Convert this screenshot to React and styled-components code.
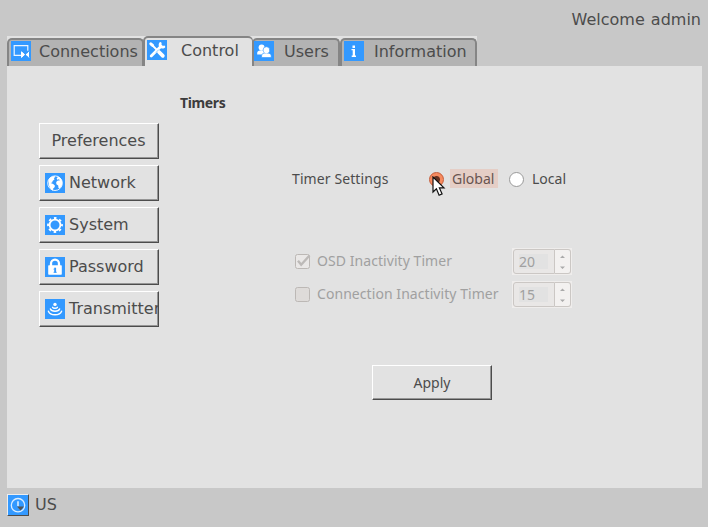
import React from "react";
import styled, { createGlobalStyle } from "styled-components";

const Global = createGlobalStyle`
  * { box-sizing: border-box; }
  body { margin: 0; overflow: hidden; background: #c8c8c8; }
`;

const Screen = styled.div`
  width: 708px;
  height: 527px;
  display: flex;
  flex-direction: column;
  background: #c8c8c8;
  color: #4c4c4c;
  font: 16px/20px "DejaVu Sans", sans-serif;
  white-space: nowrap;
`;

const Header = styled.header`
  height: 36px;
  padding: 10px 7px 0 0;
  text-align: right;
  word-spacing: 1px;
`;

const TabStrip = styled.nav`
  display: flex;
  align-items: flex-end;
  width: 470px;
  height: 30px;
  margin-left: 7px;
  background: #e2e2e2;
`;

const Tab = styled.div`
  display: flex;
  align-items: flex-start;
  width: ${(p) => p.$width}px;
  height: ${(p) => (p.$active ? 30 : 28)}px;
  padding: ${(p) => (p.$active ? 2 : 1)}px 0 0 ${(p) => p.$inset}px;
  border: 2px solid #858585;
  border-bottom: 0;
  border-radius: 5px 5px 0 0;
  background: ${(p) => (p.$active ? "#e2e2e2" : "#b3b3b3")};
  ${(p) => p.$active && "margin: 0 -1px; z-index: 1; border-right-width: 1px;"}
`;

const TabLabel = styled.span`
  margin-left: ${(p) => p.$gap}px;
  padding-top: 1px;
`;

const Tile = styled.svg`
  flex: none;
  width: 20px;
  height: 20px;
  background: #3399ff;
  color: #fff;
`;

const Panel = styled.main`
  display: flex;
  width: 695px;
  height: 422px;
  margin-left: 7px;
  padding-left: 32px;
  background: #e2e2e2;
`;

const Sidebar = styled.div`
  display: flex;
  flex-direction: column;
  gap: 6px;
  width: 120px;
  margin-top: 57px;
`;

const Button = styled.div`
  display: flex;
  align-items: center;
  justify-content: ${(p) => (p.$centered ? "center" : "flex-start")};
  width: 120px;
  height: ${(p) => p.$height || 36}px;
  padding-left: ${(p) => (p.$centered ? 0 : 5)}px;
  overflow: hidden;
  border: 1px solid;
  border-color: #fff #4c4c4c #4c4c4c #fff;
  box-shadow: inset -1px -1px #969696;
`;

const ButtonLabel = styled.span`
  margin-left: ${(p) => (p.$icon ? 4 : -1)}px;
`;

const Settings = styled.section`
  flex: 1;
  padding: 27px 0 0 21px;
  font: 14px/20px "Noto Sans", sans-serif;
`;

const Title = styled.h1`
  margin: 0;
  font-size: 14px;
  line-height: 20px;
  letter-spacing: -0.35px;
  color: #3c3c3c;
`;

const Row = styled.div`
  display: flex;
  align-items: center;
  height: ${(p) => p.$height}px;
  margin: ${(p) => p.$top}px 0 0 ${(p) => p.$left}px;
`;

const FieldName = styled.span`
  width: 137px;
  letter-spacing: 0.1px;
`;

const Radio = styled.span`
  position: relative;
  width: 15px;
  height: 15px;
  margin-top: 1px;
  border-radius: 50%;
  border: 1px solid ${(p) => (p.$on ? "#c65a36" : "#999")};
  background: ${(p) => (p.$on ? "radial-gradient(circle, #63301f 0 3px, #f68b60 4px)" : "#fff")};
`;

const Pointer = styled.svg`
  position: absolute;
  left: 2px;
  top: 3px;
  width: 14px;
  height: 21px;
`;

const RadioLabel = styled.span`
  height: 19px;
  width: 48px;
  margin: -1px ${(p) => (p.$on ? 11 : 0)}px 0 6px;
  padding-left: 2px;
  line-height: 19px;
  background: ${(p) => (p.$on ? "#e5cec6" : "transparent")};
  color: ${(p) => (p.$on ? "#685450" : "#4c4c4c")};
`;

const Check = styled.svg`
  width: 17px;
  height: 17px;
`;

const CheckLabel = styled.span`
  width: 195px;
  margin-left: 6px;
  padding-bottom: 2px;
  color: #a0a0a0;
  letter-spacing: 0.06px;
`;

const Spinner = styled.div`
  display: flex;
  width: 60px;
  height: 27px;
  border: 1px solid #efedec;
  background: #efedec;
`;

const SpinValue = styled.div`
  display: flex;
  flex: 1;
  padding: 4px 5px;
  border: 1px solid #cbc7c4;
  border-radius: 3px 0 0 3px;
  background: #e9e7e6;
  color: #a0a0a0;
`;

const SpinText = styled.span`
  width: 29px;
  height: 15px;
  background: #e2e2e2;
  line-height: 16px;
`;

const SpinArrows = styled.svg`
  width: 16px;
  height: 25px;
  border: 1px solid #cbc7c4;
  border-left: 0;
  border-radius: 0 3px 3px 0;
  background: #f3f1f0;
`;

const ApplyRow = styled.div`
  margin: 57px 0 0 192px;
`;

const Footer = styled.footer`
  display: flex;
  align-items: center;
  gap: 6px;
  padding: 6px 0 0 7px;
`;

const PowerButton = styled.div`
  display: flex;
  width: 22px;
  height: 22px;
  border: 1px solid;
  border-color: #eee #4c4c4c #4c4c4c #eee;
`;

const art = {
  monitor: (
    <g fill="none" stroke="currentColor">
      <path d="M11 14.3H3.2V4.7h13.6v5" strokeWidth="1.2" opacity=".9" />
      <path d="M10.5 10.8l3 2.8-3 2.8zM18 10.8l-2.2 2.8 2.2 2.8" fill="currentColor" strokeWidth="1" />
      <path d="M15 13.6h3" strokeWidth="1.6" />
    </g>
  ),
  tools: (
    <g fill="none" stroke="currentColor" strokeLinecap="round">
      <path d="M4.2 16l10-10" strokeWidth="2.8" />
      <path d="M13.4 3.4c-1.4 2.6.8 4.8 3.6 3.4" strokeWidth="2.5" />
      <path d="M3.8 3.8l1.8 1.6" strokeWidth="3" />
      <path d="M5 5l6 6" strokeWidth="1.8" />
      <path d="M12 12l3.8 3.8" strokeWidth="3.8" />
      <path d="M9.2 12.3l2.4-2.5" stroke="#39f" strokeWidth=".5" />
    </g>
  ),
  users: (
    <g fill="currentColor">
      <circle cx="7.6" cy="6.4" r="3" />
      <path d="M3.2 13.6v-1.8c0-1.8 1.6-2.6 4.4-2.6s4.4.8 4.4 2.6v1.8z" />
      <g stroke="#39f" strokeWidth=".7">
        <circle cx="12.4" cy="9" r="3.3" />
        <path d="M7.6 16.6v-1.8c0-2 1.7-2.9 4.8-2.9s4.8.9 4.8 2.9v1.8z" />
      </g>
      <circle cx="12.4" cy="9.6" r="2.7" />
    </g>
  ),
  info: (
    <g fill="currentColor">
      <rect x="8.5" y="4.5" width="2.5" height="2.5" />
      <path d="M7.5 8H11v6.5h1V16H7.7v-1.5h1V9.2H7.5z" />
    </g>
  ),
  globe: (
    <g>
      <circle cx="10" cy="10.2" r="7.3" fill="none" stroke="currentColor" strokeWidth=".9" />
      <path
        d="M3.4 7.2C4.6 4.8 6.8 3 9.6 2.9l.6 1.3-1.4.8.8 1.2-2 1.8-.4 1.6-1.6.4 2.6 1 1.8 1.8-.6 1.6-1.2 1-.5 2.3C5 15.4 3.8 13 3.8 11z"
        fill="currentColor"
      />
      <path
        d="M12 3.2c2.6.6 4.6 2.6 5.2 5.2l-.1 3.6-2.4 3.4-1.2-.3-.3-2.6-1.8-1.2-.2-2.2 1.6-1.6 2-.1-.8-1.2-1.8.5-.6-1.2 1-.9z"
        fill="currentColor"
      />
    </g>
  ),
  gear: (
    <g fill="none" stroke="currentColor">
      <circle cx="10" cy="10" r="5.4" strokeWidth="1.8" />
      <circle cx="10" cy="10" r="7" strokeWidth="1.8" strokeDasharray="2.6 2.898" strokeDashoffset="1.3" />
    </g>
  ),
  lock: (
    <g>
      <path d="M6 9V6.7a4 4 0 018 0V9" fill="none" stroke="currentColor" strokeWidth="2.3" />
      <rect x="3.2" y="8.3" width="13.6" height="9.4" rx=".7" fill="currentColor" />
      <path d="M9.2 10.7h1.9v5H9.2z" fill="#39f" />
      <path d="M8.5 12.2h1M8.5 15.3h3.3" stroke="#39f" strokeWidth=".8" />
    </g>
  ),
  signal: (
    <g fill="none" stroke="currentColor" strokeWidth="1.4" strokeLinecap="round">
      <circle cx="10" cy="5.4" r="1.7" fill="currentColor" stroke="none" />
      <path d="M7.6 8.3c.8 1.2 4 1.2 4.8 0M5.4 10c1.2 3 8 3 9.2 0M3.4 12.2c1.8 4.8 11.4 4.8 13.2 0" />
    </g>
  ),
  power: (
    <g fill="none" stroke="#dceeff" strokeWidth="1.3">
      <circle cx="10" cy="10.2" r="6.7" />
      <path d="M10 6.3v5" strokeWidth="1.6" />
      <path d="M9 11.5h7l-3.5 4z" fill="#555" stroke="none" />
    </g>
  ),
};

const Icon = ({ name }) => <Tile viewBox="0 0 20 20">{art[name]}</Tile>;

const tabs = [
  { label: "Connections", icon: "monitor", width: 137, inset: 2, gap: 8 },
  { label: "Control", icon: "tools", width: 110, inset: 2, gap: 14, active: true },
  { label: "Users", icon: "users", width: 88, inset: 0, gap: 10 },
  { label: "Information", icon: "info", width: 137, inset: 2, gap: 10 },
];

const sections = [
  { label: "Preferences" },
  { label: "Network", icon: "globe" },
  { label: "System", icon: "gear" },
  { label: "Password", icon: "lock" },
  { label: "Transmitter", icon: "signal" },
];

function NumberSpinner({ value }) {
  return (
    <Spinner>
      <SpinValue><SpinText>{value}</SpinText></SpinValue>
      <SpinArrows viewBox="0 0 15 23">
        <path d="M5 8h5L7.5 5.5zM5 16.5h5L7.5 19z" fill="#aaa" />
      </SpinArrows>
    </Spinner>
  );
}

function CheckBox({ checked }) {
  return (
    <Check viewBox="0 0 17 17">
      <rect x="1.5" y="1.5" width="14" height="14" rx="2" fill={checked ? "#eae8e7" : "#dedbd9"} stroke="#bcb8b5" />
      {checked && <path d="M4 7.7l3.2 4L15.5 2.5" fill="none" stroke="#bdbab8" strokeWidth="2.4" />}
    </Check>
  );
}

export default function App() {
  return (
    <Screen>
      <Global />
      <Header>Welcome admin</Header>
      <TabStrip>
        {tabs.map((t) => (
          <Tab key={t.label} $width={t.width} $inset={t.inset} $active={t.active}>
            <Icon name={t.icon} />
            <TabLabel $gap={t.gap}>{t.label}</TabLabel>
          </Tab>
        ))}
      </TabStrip>
      <Panel>
        <Sidebar>
          {sections.map((s) => (
            <Button key={s.label} $centered={!s.icon}>
              {s.icon && <Icon name={s.icon} />}
              <ButtonLabel $icon={s.icon}>{s.label}</ButtonLabel>
            </Button>
          ))}
        </Sidebar>
        <Settings>
          <Title>Timers</Title>
          <Row $top={56} $left={112} $height={20}>
            <FieldName>Timer Settings</FieldName>
            <Radio $on>
              <Pointer viewBox="0 0 14 21">
                <path d="M1 1v15l3.4-3.2 2.7 6.4 3-1.3-2.7-6H12z" fill="#fff" stroke="#111" strokeWidth="1.2" />
              </Pointer>
            </Radio>
            <RadioLabel $on>Global</RadioLabel>
            <Radio />
            <RadioLabel>Local</RadioLabel>
          </Row>
          <Row $top={59} $left={114} $height={27}>
            <CheckBox checked />
            <CheckLabel>OSD Inactivity Timer</CheckLabel>
            <NumberSpinner value="20" />
          </Row>
          <Row $top={6} $left={114} $height={27}>
            <CheckBox />
            <CheckLabel>Connection Inactivity Timer</CheckLabel>
            <NumberSpinner value="15" />
          </Row>
          <ApplyRow>
            <Button $centered $height={35}>Apply</Button>
          </ApplyRow>
        </Settings>
      </Panel>
      <Footer>
        <PowerButton><Icon name="power" /></PowerButton>
        US
      </Footer>
    </Screen>
  );
}
